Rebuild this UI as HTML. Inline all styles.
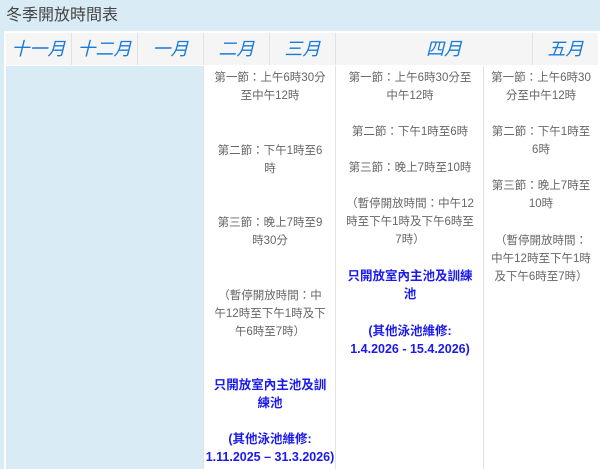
<!DOCTYPE html>
<html><head><meta charset="utf-8"><style>
body{margin:0;width:600px;height:469px;overflow:hidden;background:#d9ecf5;font-family:"Liberation Sans","Noto Sans CJK TC",sans-serif;position:relative}
.t{position:absolute;left:6px;top:1px;font-size:16px;color:#444}
.tbl{position:absolute;left:4px;top:31px;width:596px;height:438px;background:#fff}
.hd{position:absolute;top:2px;height:32px;background:#f5f5f5;border-right:1px solid #e2e2e2;color:#1a7bd6;font-style:italic;font-size:18px;line-height:32px;text-align:center;box-sizing:border-box}
.col{position:absolute;top:35px;bottom:0;background:#fff;border-right:1px solid #e2e2e2;box-sizing:border-box}
.p{position:absolute;font-size:11.5px;line-height:18px;color:#666;text-align:center}
.b{color:#1a1aee;font-weight:bold;font-size:12.5px}
</style></head><body>
<div class="t">冬季開放時間表</div>
<div class="tbl">
<div class="hd" style="left:2px;width:66px">十一月</div>
<div class="hd" style="left:68px;width:66px">十二月</div>
<div class="hd" style="left:134px;width:66px">一月</div>
<div class="hd" style="left:200px;width:66px">二月</div>
<div class="hd" style="left:266px;width:66px">三月</div>
<div class="hd" style="left:332px;width:197px;padding-left:20px">四月</div>
<div class="hd" style="left:529px;width:65px;border-right:none">五月</div>
<div class="col" style="left:2px;width:198px;background:#d9ecf5;border-right:1px solid #e2e2e2"></div>
<div class="col" style="left:200px;width:132px"></div>
<div class="col" style="left:332px;width:148px"></div>
<div class="col" style="left:480px;width:114px;border-right:none"></div>
</div>
<div class="p" style="left:206px;width:128px;top:69px">第一節：上午6時30分<br>至中午12時</div>
<div class="p" style="left:206px;width:128px;top:142px">第二節：下午1時至6<br>時</div>
<div class="p" style="left:206px;width:128px;top:214px">第三節：晚上7時至9<br>時30分</div>
<div class="p" style="left:206px;width:128px;top:287px">（暫停開放時間：中<br>午12時至下午1時及下<br>午6時至7時）</div>
<div class="p b" style="left:204px;width:132px;top:376px">只開放室內主池及訓<br>練池</div>
<div class="p b" style="left:204px;width:132px;top:430px">(其他泳池維修:<br>1.11.2025 – 31.3.2026)</div>
<div class="p" style="left:338px;width:144px;top:69px">第一節：上午6時30分至<br>中午12時</div>
<div class="p" style="left:338px;width:144px;top:123px">第二節：下午1時至6時</div>
<div class="p" style="left:338px;width:144px;top:159px">第三節：晚上7時至10時</div>
<div class="p" style="left:338px;width:144px;top:195px">（暫停開放時間：中午12<br>時至下午1時及下午6時至<br>7時）</div>
<div class="p b" style="left:336px;width:148px;top:267px">只開放室內主池及訓練<br>池</div>
<div class="p b" style="left:336px;width:148px;top:322px">(其他泳池維修:<br>1.4.2026 - 15.4.2026)</div>
<div class="p" style="left:486px;width:110px;top:69px">第一節：上午6時30<br>分至中午12時</div>
<div class="p" style="left:486px;width:110px;top:123px">第二節：下午1時至<br>6時</div>
<div class="p" style="left:486px;width:110px;top:177px">第三節：晚上7時至<br>10時</div>
<div class="p" style="left:486px;width:110px;top:232px">（暫停開放時間：<br>中午12時至下午1時<br>及下午6時至7時）</div>
</body></html>
